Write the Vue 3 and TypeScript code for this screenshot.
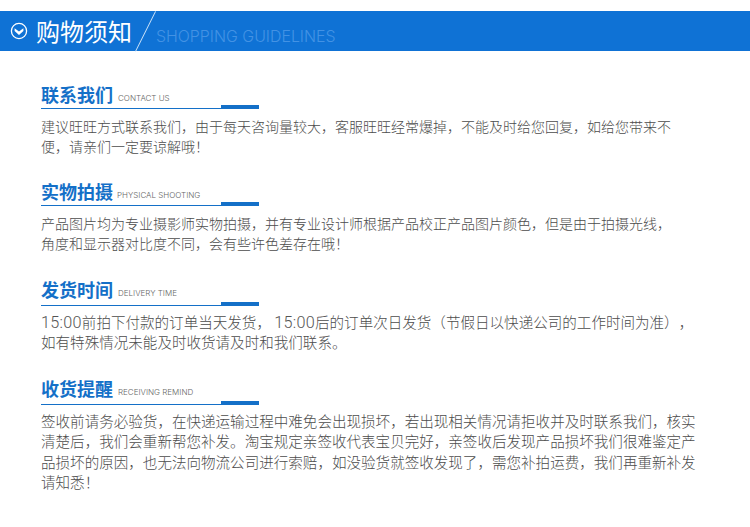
<script setup lang="ts">
interface Chunk { t: string; num?: boolean }
interface Section { title: string; en: string; lines: Chunk[][] }
const txt = (t: string): Chunk[] => [{ t }]
const sections: Section[] = [
  { title: '联系我们', en: 'CONTACT US', lines: [txt('建议旺旺方式联系我们，由于每天咨询量较大，客服旺旺经常爆掉，不能及时给您回复，如给您带来不'), txt('便，请亲们一定要谅解哦！')] },
  { title: '实物拍摄', en: 'PHYSICAL SHOOTING', lines: [txt('产品图片均为专业摄影师实物拍摄，并有专业设计师根据产品校正产品图片颜色，但是由于拍摄光线，'), txt('角度和显示器对比度不同，会有些许色差存在哦！')] },
  { title: '发货时间', en: 'DELIVERY TIME', lines: [[{ t: '15:00', num: true }, { t: '前拍下付款的订单当天发货， ' }, { t: '15:00', num: true }, { t: '后的订单次日发货（节假日以快递公司的工作时间为准），' }], txt('如有特殊情况未能及时收货请及时和我们联系。')] },
  { title: '收货提醒', en: 'RECEIVING REMIND', lines: [txt('签收前请务必验货，在快递运输过程中难免会出现损坏，若出现相关情况请拒收并及时联系我们，核实'), txt('清楚后，我们会重新帮您补发。淘宝规定亲签收代表宝贝完好，亲签收后发现产品损坏我们很难鉴定产'), txt('品损坏的原因，也无法向物流公司进行索赔，如没验货就签收发现了，需您补拍运费，我们再重新补发'), txt('请知悉！')] },
]
</script>

<template>
  <div class="page">
    <header class="banner">
      <svg class="chev" width="18" height="18" viewBox="0 0 18 18">
        <circle cx="9" cy="9" r="7.6" fill="none" stroke="#fff" stroke-width="1.3" />
        <path d="M4.6 6.2 L9 9.4 L13.4 6.2 L13.4 9 L9 13 L4.6 9 Z" fill="#fff" />
      </svg>
      <h1 class="banner-title">购物须知</h1>
      <span class="slash"></span>
      <span class="banner-en">SHOPPING GUIDELINES</span>
    </header>
    <section v-for="(s, k) in sections" :key="s.title" class="sec" :class="'sec-' + k">
      <div class="head">
        <h2 class="title">{{ s.title }}</h2>
        <span class="en">{{ s.en }}</span>
      </div>
      <div class="rule"><span class="thick"></span></div>
      <p v-for="(l, i) in s.lines" :key="i" class="line"><span v-for="(c, j) in l" :key="j" :class="{ num: c.num }">{{ c.t }}</span></p>
    </section>
  </div>
</template>

<style>
html, body { margin: 0; background: #fff; }
</style>

<style scoped>
.page {
  width: 750px;
  height: 527px;
  overflow: hidden;
  padding-top: 11px;
  box-sizing: border-box;
  font-family: "Noto Sans CJK SC", "Liberation Sans", sans-serif;
  background: #fff;
}
.banner {
  position: relative;
  height: 40px;
  background: #0f72d5;
  display: flex;
  align-items: center;
  color: #fff;
  padding-left: 10px;
  margin-bottom: 32px;
}
.chev { flex: none; }
.banner-title {
  margin: 0 0 0 8px;
  font-size: 24px;
  font-weight: 400;
  line-height: 40px;
  width: 96px;
  white-space: nowrap;
}
.slash {
  position: absolute;
  left: 145px;
  top: -2.5px;
  width: 1px;
  height: 45px;
  background: #cfe4fa;
  transform: rotate(26.6deg);
}
.banner-en {
  margin: 11px 0 0 24px;
  font-family: Inter, "Liberation Sans", sans-serif;
  font-size: 15.9px;
  font-weight: 300;
  color: #4392e4;
  white-space: nowrap;
}
.sec {
  padding: 0 41px;
  margin-bottom: 24px;
}
.sec-1 { margin-bottom: 27px; }
.sec-2 { margin-bottom: 26.2px; }
.head {
  display: flex;
  align-items: flex-end;
  height: 24px;
  box-sizing: border-box;
  padding-bottom: 1px;
}
.title {
  margin: 0;
  font-size: 18px;
  font-weight: 700;
  line-height: 24px;
  flex: none;
  color: #1470c8;
}
.en {
  margin: 0 0 3px 5px;
  font-family: Inter, "Liberation Sans", sans-serif;
  font-size: 8px;
  font-weight: 300;
  line-height: 10px;
  color: #666;
}
.sec-1 .en { margin-left: 4px; }
.sec-2 .head, .sec-3 .head { padding-bottom: 3px; }
.rule {
  position: relative;
  width: 218px;
  height: 1px;
  background: #1470c8;
  margin-top: 1px;
  margin-bottom: 7px;
}
.sec-2 .rule, .sec-3 .rule { margin-bottom: 6px; }
.thick {
  position: absolute;
  right: 0;
  bottom: 0;
  width: 38px;
  height: 4px;
  background: #1470c8;
}
.line {
  margin: 0;
  font-size: 14px;
  font-weight: 300;
  line-height: 20px;
  color: #4c4c4c;
  white-space: pre;
  text-spacing-trim: space-all;
}
.sec-2 .line, .sec-3 .line {
  font-size: 14.55px;
  line-height: 20.4px;
}
.num {
  font-family: Roboto, "Liberation Sans", sans-serif;
  font-size: 16.2px;
  font-weight: 300;
  letter-spacing: 0.3px;
  line-height: 1;
  color: #555;
}
</style>
